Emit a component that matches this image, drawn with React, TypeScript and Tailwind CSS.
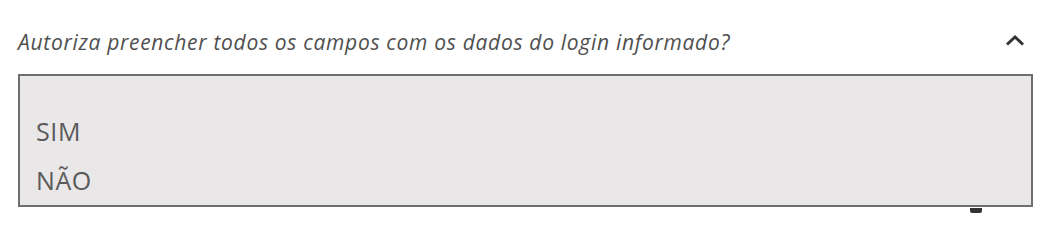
import { useState } from 'react';

const options = ['', 'SIM', 'NÃO'];

export default function App() {
  const [value, setValue] = useState('');

  return (
    <div className="w-[1045px] h-[215px] bg-white overflow-hidden font-['Open_Sans',sans-serif]">
      {/* Question header */}
      <div className="flex items-start justify-between pl-[18px] pr-[20px] pt-[28px] h-[60px]">
        <p className="text-[21px] italic tracking-[0.7px] text-[#505050] leading-[28px]">
          Autoriza preencher todos os campos com os dados do login informado?
        </p>
        <svg className="mt-[6px] w-[20px] h-[12px] text-[#333333]" viewBox="0 0 20 12" fill="none">
          <path d="M2 10.5L10 3l8 7.5" stroke="currentColor" strokeWidth={3} />
        </svg>
      </div>

      {/* Listbox */}
      <div className="relative ml-[18px] mt-[14px] w-[1015px]">
        <div className="h-[133px] bg-[#e9e7e8] border-2 border-[#6e6e6e] pl-[16px] pt-[12px] flex flex-col">
          {options.map((opt) => (
            <button
              key={opt || 'empty'}
              onClick={() => setValue(opt)}
              className={`h-[49px] text-left text-[25px] tracking-[0.6px] text-[#5a5a5a] leading-[49px] ${
                value === opt && opt ? 'font-semibold' : ''
              }`}
            >
              {opt}
            </button>
          ))}
        </div>
        <span className="absolute left-[952px] top-[134px] w-[12px] h-[5px] bg-[#333333] rounded-b-[2px]" />
      </div>
    </div>
  );
}
